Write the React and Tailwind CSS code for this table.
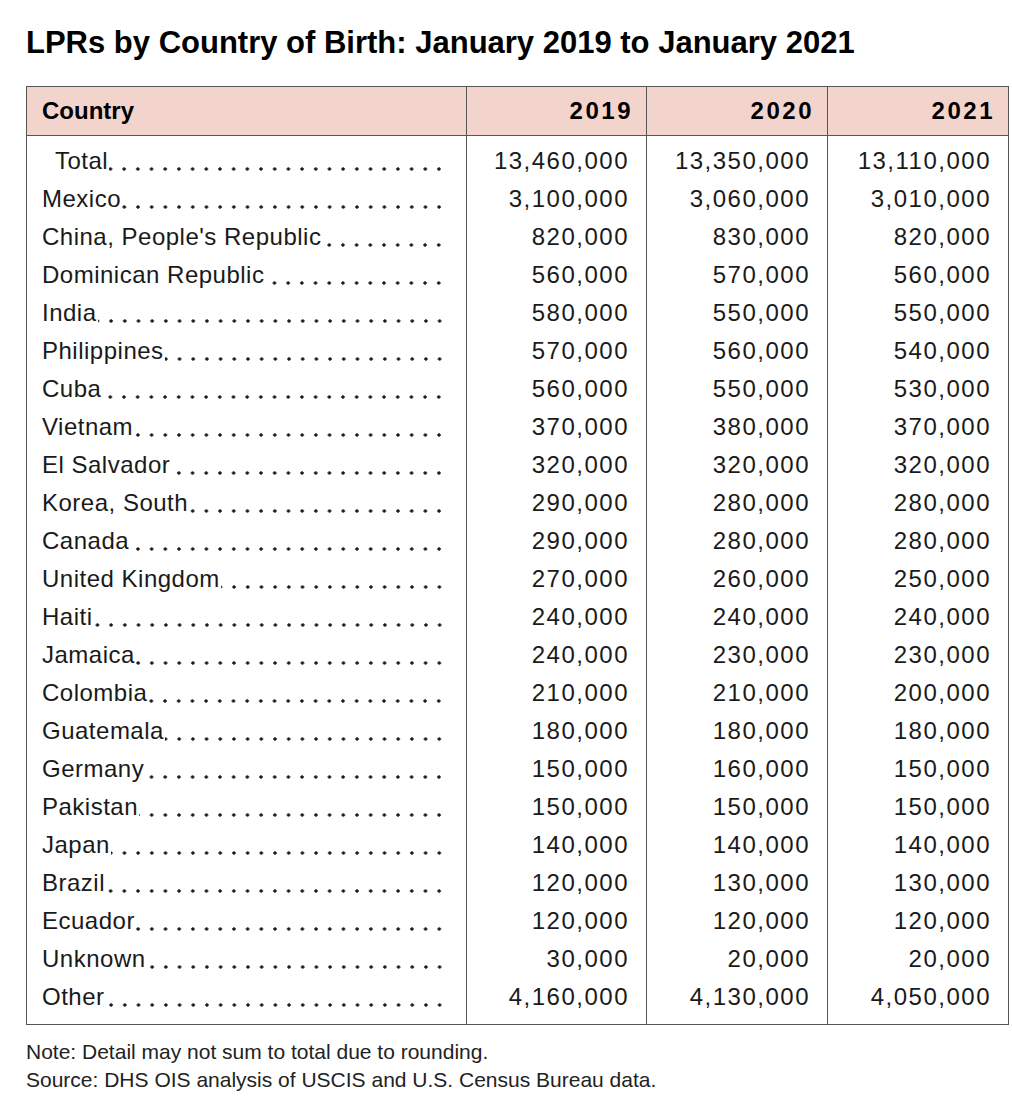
const rows = [
  ["Total", "13,460,000", "13,350,000", "13,110,000"],
  ["Mexico", "3,100,000", "3,060,000", "3,010,000"],
  ["China, People's Republic", "820,000", "830,000", "820,000"],
  ["Dominican Republic", "560,000", "570,000", "560,000"],
  ["India", "580,000", "550,000", "550,000"],
  ["Philippines", "570,000", "560,000", "540,000"],
  ["Cuba", "560,000", "550,000", "530,000"],
  ["Vietnam", "370,000", "380,000", "370,000"],
  ["El Salvador", "320,000", "320,000", "320,000"],
  ["Korea, South", "290,000", "280,000", "280,000"],
  ["Canada", "290,000", "280,000", "280,000"],
  ["United Kingdom", "270,000", "260,000", "250,000"],
  ["Haiti", "240,000", "240,000", "240,000"],
  ["Jamaica", "240,000", "230,000", "230,000"],
  ["Colombia", "210,000", "210,000", "200,000"],
  ["Guatemala", "180,000", "180,000", "180,000"],
  ["Germany", "150,000", "160,000", "150,000"],
  ["Pakistan", "150,000", "150,000", "150,000"],
  ["Japan", "140,000", "140,000", "140,000"],
  ["Brazil", "120,000", "130,000", "130,000"],
  ["Ecuador", "120,000", "120,000", "120,000"],
  ["Unknown", "30,000", "20,000", "20,000"],
  ["Other", "4,160,000", "4,130,000", "4,050,000"],
];

// dot leader: dots on a fixed grid, lined up on the right.
// the dots run under the label, whose white box hides them
function Leader({ label, indent }) {
  return (
    <div className={`flex h-[38px] ${indent ? "pl-[13px]" : ""}`}>
      <span className="relative z-10 bg-white whitespace-nowrap tracking-[0.5px] pr-[1px]">{label}</span>
      <span className="flex-1 ml-[-40px] h-[38px] bg-[radial-gradient(circle_at_50%_27px,#1a1a1a_1.4px,transparent_1.9px)] bg-[length:13.7px_38px] bg-repeat-x bg-right" />
    </div>
  );
}

export default function App() {
  return (
    <div className="min-h-screen bg-white text-[#1a1a1a] font-['Liberation_Sans',Arial,sans-serif]">
      <div className="w-[1012px] pl-[26px] pr-[4px] pt-[24px]">
        <h1 className="text-[31px] leading-[38px] font-bold text-black">
          LPRs by Country of Birth: January 2019 to January 2021
        </h1>

        <table className="mt-[24px] w-[982px] border-collapse border-[1.5px] border-[#555] text-[24px] table-fixed">
          <colgroup>
            <col className="w-[440px]" />
            <col className="w-[180px]" />
            <col className="w-[181px]" />
            <col className="w-[181px]" />
          </colgroup>
          <thead>
            <tr className="bg-[#f3d4cc] h-[49px] border-b-[1.5px] border-[#555]">
              <th className="text-left font-bold pl-[15px] text-black">Country</th>
              {["2019", "2020", "2021"].map((y) => (
                <th
                  key={y}
                  className="text-right font-bold pr-[13px] tracking-[2.5px] border-l-[1.5px] border-[#555] text-black"
                >
                  {y}
                </th>
              ))}
            </tr>
          </thead>
          <tbody>
            {rows.map((r, i) => {
              const first = i === 0;
              const last = i === rows.length - 1;
              const pad = first ? "pt-[6px]" : last ? "pb-[8px]" : "";
              return (
                <tr key={r[0]}>
                  <td className={`pl-[15px] pr-[20px] leading-[38px] ${pad}`}>
                    <Leader label={r[0]} indent={first} />
                  </td>
                  {r.slice(1).map((v, j) => (
                    <td
                      key={j}
                      className={`text-right pr-[17px] tracking-[1.5px] leading-[38px] border-l-[1.5px] border-[#555] ${pad}`}
                    >
                      {v}
                    </td>
                  ))}
                </tr>
              );
            })}
          </tbody>
        </table>

        <div className="mt-[13px] text-[21px] leading-[28px] text-[#222]">
          <p>Note: Detail may not sum to total due to rounding.</p>
          <p>Source: DHS OIS analysis of USCIS and U.S. Census Bureau data.</p>
        </div>
      </div>
    </div>
  );
}
